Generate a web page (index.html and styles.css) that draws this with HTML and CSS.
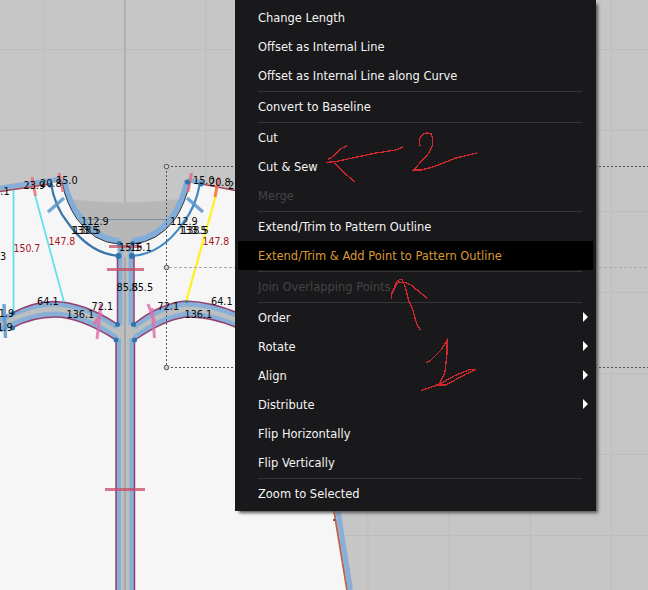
FILE: index.html
```html
<!DOCTYPE html>
<html lang="en">
<head>
<meta charset="utf-8">
<title>Pattern editor</title>
<link rel="stylesheet" href="styles.css">
</head>
<body>
<main class="workspace">
  <svg class="canvas" viewBox="0 0 648 590" aria-label="Pattern canvas">
    <path class="grid" d="M44 0V590M206 0V590M368 0V590M449 0V590M530.5 0V590M611.500 0V590M0 49.500H648M0 130.500H648M0 211.500H648M0 292.500H648M0 373.500H648M0 454.500H648M0 535.500H648"/>
    <path class="axis" d="M125 0V590"/>
    <path class="back-neck" d="M70 199Q125 206 178 199L174 219Q158 241 135 243H118Q96 243 79 219Z"/>
    <path class="guide" d="M83 219.500H166"/>

    <path class="fabric" d="M0 191L61 182Q66 201 77 218Q95 243 119 244V324Q85 302 55 302Q32 303 13 313L0 318Z"/>
    <path class="fabric" d="M0 330L12 328Q32 317 55 317Q80 317 116 340V590H0Z"/>
    <path class="fabric" d="M190 182L250 194V318Q212 300 186 301Q160 303 134 324V244Q158 242 174 220Q184 205 190 182Z"/>
    <path class="fabric" d="M135 340Q170 317 190 317Q214 318 240 329L334 511L347 590H135Z"/>

    <path class="gap" d="M118 244H133V324Q160 303 186 301Q212 302 238 314V329Q212 317 190 317Q170 317 135 340V590H116V340Q80 317 55 317Q32 317 0 332V318Q32 303 55 302Q85 302 118 324Z"/>
    <path class="strip-axis" d="M125 257V590"/>
    <path class="band" d="M120 246V325M131 246V325M118.500 338V590M132 338V590"/>
    <path class="band" d="M0 320Q32 304 53 304Q84 304 117 327M0 330Q32 314 55 314Q84 315 117 338M134 327Q160 306 186 304Q212 304 238 316M134 338Q165 315 190 314Q212 315 238 326"/>
    <path class="seam" d="M13 313Q32 302 53 301.500Q84 302 117 324M12 328Q32 317 55 317Q80 317 116 340M134 324Q160 303 186 301Q212 302 238 313M135 340Q168 317 190 317Q212 317 238 328"/>
    <path class="seam" d="M117.500 257V324M134 257V324M116 340V590M134.500 340V590"/>
    <path class="band" d="M0 188L61 179M188 180L204 183"/>
    <path class="red-line" d="M0 191.500L50 184M202 184L238 191"/>
    <path class="neck-band" d="M64 180Q68 202 80 217Q96 239 119 241M187.500 180Q183 202 172 217Q156 239 132 241"/>
    <path class="neck-edge" d="M62 182Q66 203 77 219Q94 243 119 244M190 182Q185 204 175 219Q158 242 132 244"/>
    <path class="neck-inner left" d="M51 184Q55 207 68 223Q90 254 119 256"/>
    <path class="neck-inner" d="M200 183Q196 207 183 223Q162 254 132 256"/>

    <path class="cyan" d="M13.500 190V313M35 195L64 302"/>
    <path class="yellow" d="M216 195L186 302"/>
    <path class="orange" d="M217.500 184L215 197"/>
    <path class="notch-coral" d="M32 177L35.500 196M59 173L63 192M191.500 173L188 192M219 177L217 188"/>
    <path class="notch-blue" d="M48 212L64 198M187 198L203 212M4 304L5.500 338"/>
    <path class="notch-pink" d="M101 304L97 339M94 324L102 313M148 304L155 323M152 308L154.500 338"/>
    <path class="notch-red" d="M109 246.500H142M107 269.500H144M105 489.500H145"/>
    <path class="red-line side" d="M334 511L347 590"/>
    <path class="band" d="M338 511L350.500 590"/>
    <path class="seam-dot" d="M333 519H336V521H333Z"/>

    <g class="nodes">
      <circle cx="50.500" cy="185" r="2.500"/><circle cx="201" cy="184" r="2.500"/><circle cx="187.500" cy="182" r="2.500"/>
      <circle cx="119.500" cy="243.500" r="2.500"/><circle cx="132.500" cy="243.500" r="2.500"/>
      <circle cx="118.500" cy="256" r="3"/><circle cx="132" cy="256" r="3"/>
      <circle cx="117.500" cy="324.500" r="2.500"/><circle cx="133.500" cy="324.500" r="2.500"/>
      <circle cx="116" cy="340" r="2.500"/><circle cx="134.500" cy="340" r="2.500"/>
      <circle cx="13" cy="313" r="2.300"/><circle cx="12.500" cy="328" r="2.500"/><circle cx="186.500" cy="301.500" r="1.500"/>
    </g>

    <path class="select" d="M166.500 167V367M167 166.500H648M167 367.500H648"/>
    <path class="select middle" d="M169 267.500H648"/>
    <g class="handles"><circle cx="166.500" cy="166.500" r="2.300"/><circle cx="166.500" cy="267.500" r="2.300"/><circle cx="166.500" cy="367.500" r="2.300"/></g>

    <g class="measures">
      <text x="-12" y="195">76.1</text><text x="23.500" y="189">23.9</text><text x="40" y="187">20.8</text><text x="56" y="184">15.0</text>
      <text x="81" y="225">112.9</text><text x="71" y="234">133.5</text><text x="73" y="234">138.5</text>
      <text x="170" y="225">112.9</text><text x="179" y="234">133.5</text><text x="181" y="234">138.5</text>
      <text x="193" y="184">15.0</text><text x="209" y="186">20.8</text><text x="228" y="189">23.9</text>
      <text x="119" y="251">15.1</text><text x="130" y="251">15.1</text>
      <text x="116.500" y="291">85.5</text><text x="131.500" y="291">85.5</text>
      <text x="37" y="305">64.1</text><text x="66.500" y="318">136.1</text><text x="91.500" y="310">72.1</text>
      <text x="157.500" y="310">72.1</text><text x="184.500" y="318">136.1</text><text x="211" y="305">64.1</text>
      <text x="0" y="260">3</text><text x="-7.500" y="317">41.9</text><text x="-9" y="331">41.9</text>
      <text class="hot" x="13.500" y="252">150.7</text><text class="hot" x="48.500" y="245">147.8</text><text class="hot" x="202.500" y="245">147.8</text>
    </g>
  </svg>

  <ul class="menu">
    <li class="item">Change Length</li>
    <li class="item">Offset as Internal Line</li>
    <li class="item">Offset as Internal Line along Curve</li>
    <li class="separator"></li>
    <li class="item">Convert to Baseline</li>
    <li class="separator"></li>
    <li class="item">Cut</li>
    <li class="item">Cut &amp; Sew</li>
    <li class="item disabled">Merge</li>
    <li class="separator"></li>
    <li class="item">Extend/Trim to Pattern Outline</li>
    <li class="item active">Extend/Trim &amp; Add Point to Pattern Outline</li>
    <li class="separator"></li>
    <li class="item disabled">Join Overlapping Points</li>
    <li class="separator"></li>
    <li class="item submenu">Order</li>
    <li class="item submenu">Rotate</li>
    <li class="item submenu">Align</li>
    <li class="item submenu">Distribute</li>
    <li class="item">Flip Horizontally</li>
    <li class="item">Flip Vertically</li>
    <li class="separator"></li>
    <li class="item">Zoom to Selected</li>
  </ul>

  <svg class="ink" viewBox="0 0 648 590" aria-hidden="true">
    <path d="M403 147L396 150L376 153L336 161.500L326 162.500M347.500 145.500L342 148L331 158L328 159M333 162L349 177L355.500 182.500"/>
    <path d="M421 146L419.500 145V139L423 134L427 133L431 134L432.500 138V145L429 153L413.500 170H421L433 167L456 158L477 153"/>
    <path d="M391.500 299V294L397 281L400 279.500H403M392 294L398 282L405 282.500L411 285L427.500 298.500M402 280L405 286L409 302L412 307L417 325L420.500 330"/>
    <path d="M426.500 362.500L430 361L441 350L447 340.500V354L445 372L439.500 384M421 390.500L437 385H446L466 374L476 369.500H470L454 376L438 385"/>
  </svg>
</main>
</body>
</html>
```
FILE: styles.css
```css
body {
  margin: 0;
  overflow: hidden;
}

.workspace {
  position: relative;
  width: 648px;
  height: 590px;
  overflow: hidden;
  background: #c6c6c6;
  font-family: "DejaVu Sans Condensed", "DejaVu Sans", sans-serif;
  font-stretch: condensed;
}

.canvas,
.ink {
  position: absolute;
  inset: 0;
  width: 648px;
  height: 590px;
}

.canvas path { fill: none; }
.canvas .grid { stroke: #bdbdbd; }
.canvas .axis { stroke: #a9a9a9; stroke-width: 1.5; }
.canvas .back-neck { fill: #b7b7b7; }
.canvas .guide { stroke: #7890aa; }
.canvas .fabric { fill: #f6f6f6; }
.canvas .gap { fill: #bcbfbf; }
.canvas .strip-axis { stroke: #a6a8a5; stroke-width: 2; }
.canvas .band { stroke: #87afd7; stroke-width: 5; }
.canvas .seam { stroke: #94406f; stroke-width: 1.5; }
.canvas .red-line { stroke: #a34458; stroke-width: 1.3; }
.canvas .side { stroke: #b8644c; stroke-width: 1.8; }
.canvas .seam-dot { fill: #85594e; }
.canvas .neck-band { stroke: #80add9; stroke-width: 6; }
.canvas .neck-edge { stroke: #30343a; }
.canvas .neck-inner { stroke: #4089c2; stroke-width: 2.2; }
.canvas .left { stroke: #3c75a8; }
.canvas .cyan { stroke: #62e0ec; stroke-width: 1.8; }
.canvas .yellow { stroke: #fff21c; stroke-width: 2.2; }
.canvas .orange { stroke: #f18345; stroke-width: 3; }
.canvas .notch-coral { stroke: #e46d76; stroke-width: 3; opacity: .8; }
.canvas .notch-blue { stroke: #5b95ca; stroke-width: 3.4; opacity: .85; }
.canvas .notch-pink { stroke: #df6baa; stroke-width: 3; opacity: .8; }
.canvas .notch-red { stroke: #c64b67; stroke-width: 3; opacity: .75; }
.nodes { fill: #2d75ad; }
.canvas .select { stroke: #555; stroke-dasharray: 2 2; }
.canvas .middle { stroke: #a9a9a9; stroke-dasharray: 3 2; }
.handles { fill: #ccc; stroke: #555; }
.measures { font-size: 10.8px; fill: #080808; }
.measures .hot { fill: #a51520; font-size: 10.4px; }

.menu {
  position: absolute;
  top: 0;
  left: 235px;
  width: 361px;
  height: 511px;
  box-sizing: border-box;
  margin: 0;
  padding: 3px;
  list-style: none;
  background: #19191b;
  color: #f4f4f4;
  font-size: 12.75px;
  box-shadow: 3px 3px 3px -1px #555;
}

.item {
  display: flex;
  align-items: center;
  justify-content: space-between;
  height: 29px;
  box-sizing: border-box;
  padding: 0 5px 0 20px;
  white-space: nowrap;
}

.separator {
  height: 1px;
  margin: 0 11px 0 20px;
  padding-top: 1px;
  background: #363638 content-box;
}

.disabled { color: #444446; }
.active { background: #000; color: #d99a32; }

.submenu::after {
  content: "";
  margin-top: -2px;
  border-left: 5px solid #fff;
  border-top: 5px solid transparent;
  border-bottom: 5px solid transparent;
}

.ink path {
  fill: none;
  stroke: #cf292e;
  stroke-width: 1.3;
  shape-rendering: crispEdges;
}
```
